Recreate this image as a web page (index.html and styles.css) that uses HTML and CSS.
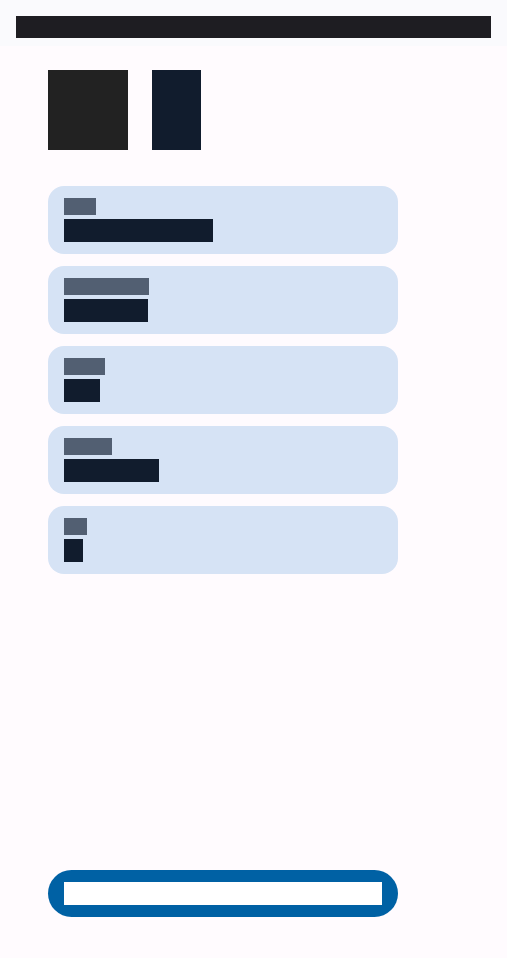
FILE: index.html
```html
<!DOCTYPE html>
<html lang="en">
<head>
<meta charset="utf-8">
<title>Details</title>
<link rel="stylesheet" href="styles.css">
</head>
<body>
<div class="page">
  <header class="header"><div class="topbar"></div></header>
  <main class="main">
    <div class="media">
      <div class="thumb thumb-a"></div>
      <div class="thumb thumb-b"></div>
    </div>
    <ul class="list">
      <li class="card"><span class="label" style="width:32px"></span><span class="value" style="width:149px"></span></li>
      <li class="card"><span class="label" style="width:85px"></span><span class="value" style="width:84px"></span></li>
      <li class="card"><span class="label" style="width:41px"></span><span class="value" style="width:36px"></span></li>
      <li class="card"><span class="label" style="width:48px"></span><span class="value" style="width:95px"></span></li>
      <li class="card"><span class="label" style="width:23px"></span><span class="value" style="width:19px"></span></li>
    </ul>
    <button class="action" type="button"><span class="action-field"></span></button>
  </main>
</div>
</body>
</html>
```
FILE: styles.css
```css
* { box-sizing: border-box; }
html, body {
  margin: 0;
  padding: 0;
  background: #fffbfe;
  font-family: "Roboto", "Liberation Sans", sans-serif;
}
.page {
  min-height: 100vh;
  display: flex;
  flex-direction: column;
}
.header {
  padding: 16px 16px 8px;
  background: #fafafd;
}
.topbar {
  height: 22px;
  background: #1e1d22;
}
.main {
  flex: 1;
  display: flex;
  flex-direction: column;
  width: 398px;
  padding: 24px 0 41px 48px;
}
.media {
  display: flex;
  gap: 24px;
}
.thumb { height: 80px; }
.thumb-a { width: 80px; background: #222222; }
.thumb-b { width: 49px; background: #111c2d; }
.list {
  list-style: none;
  margin: 36px 0 0;
  padding: 0;
  display: flex;
  flex-direction: column;
  gap: 12px;
}
.card {
  background: #d6e3f5;
  border-radius: 16px;
  padding: 12px 16px;
  display: flex;
  flex-direction: column;
  align-items: flex-start;
  gap: 4px;
}
.label {
  display: block;
  height: 17px;
  background: #525f72;
}
.value {
  display: block;
  height: 23px;
  background: #111c2d;
}
.action {
  margin-top: auto;
  width: 350px;
  height: 47px;
  border: 0;
  border-radius: 24px;
  background: #0061a4;
  padding: 12px 16px;
  display: flex;
  cursor: pointer;
}
.action-field {
  flex: 1;
  height: 23px;
  background: #ffffff;
}
```
